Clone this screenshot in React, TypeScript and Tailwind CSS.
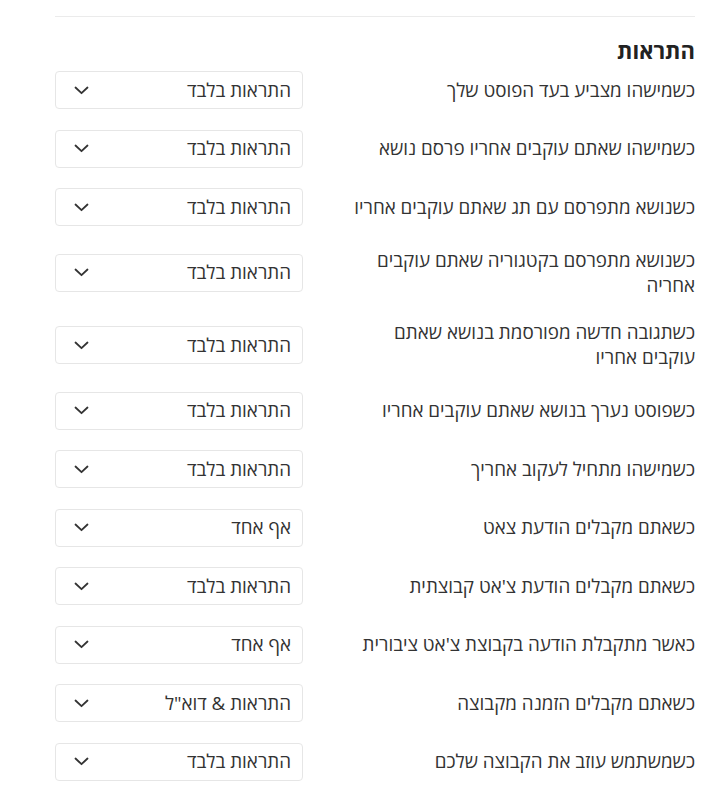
const rows: { label: string; value: string }[] = [
  { label: "כשמישהו מצביע בעד הפוסט שלך", value: "התראות בלבד" },
  { label: "כשמישהו שאתם עוקבים אחריו פרסם נושא", value: "התראות בלבד" },
  { label: "כשנושא מתפרסם עם תג שאתם עוקבים אחריו", value: "התראות בלבד" },
  { label: "כשנושא מתפרסם בקטגוריה שאתם עוקבים אחריה", value: "התראות בלבד" },
  { label: "כשתגובה חדשה מפורסמת בנושא שאתם עוקבים אחריו", value: "התראות בלבד" },
  { label: "כשפוסט נערך בנושא שאתם עוקבים אחריו", value: "התראות בלבד" },
  { label: "כשמישהו מתחיל לעקוב אחריך", value: "התראות בלבד" },
  { label: "כשאתם מקבלים הודעת צאט", value: "אף אחד" },
  { label: "כשאתם מקבלים הודעת צ'אט קבוצתית", value: "התראות בלבד" },
  { label: "כאשר מתקבלת הודעה בקבוצת צ'אט ציבורית", value: "אף אחד" },
  { label: "כשאתם מקבלים הזמנה מקבוצה", value: 'התראות & דוא"ל' },
  { label: "כשמשתמש עוזב את הקבוצה שלכם", value: "התראות בלבד" },
];

function Chevron() {
  return (
    <svg width="15" height="9" viewBox="0 0 15 9" fill="none" className="shrink-0">
      <polyline
        points="1.5,1.5 7.5,7.2 13.5,1.5"
        stroke="#333"
        strokeWidth="1.8"
        strokeLinecap="round"
        strokeLinejoin="round"
      />
    </svg>
  );
}

function FakeSelect({ value }: { value: string }) {
  return (
    <div className="w-[248px] h-[38px] shrink-0 flex items-center justify-between border border-[#e6e6e6] rounded-[4px] bg-white pr-[11px] pl-[18px] text-[18.8px] leading-[25px] text-[#333]">
      <span>{value}</span>
      <Chevron />
    </div>
  );
}

export default function App() {
  return (
    <div
      dir="rtl"
      className="w-[640px] ml-[55px] bg-white font-['Open_Sans',sans-serif] text-[#333]"
    >
      {/* divider */}
      <div className="h-[17px] border-b border-[#ebebeb]" />

      <h2 className="mt-[19px] text-[22px] leading-[29px] font-bold text-[#222]">התראות</h2>

      <div className="mt-[6px] flex flex-col gap-[20.5px]">
        {rows.map((row, i) => (
          <div key={i} className="flex items-center justify-between">
            <div className="w-[350px] py-px text-[18.8px] leading-[25px]">{row.label}</div>
            <FakeSelect value={row.value} />
          </div>
        ))}
      </div>
    </div>
  );
}
